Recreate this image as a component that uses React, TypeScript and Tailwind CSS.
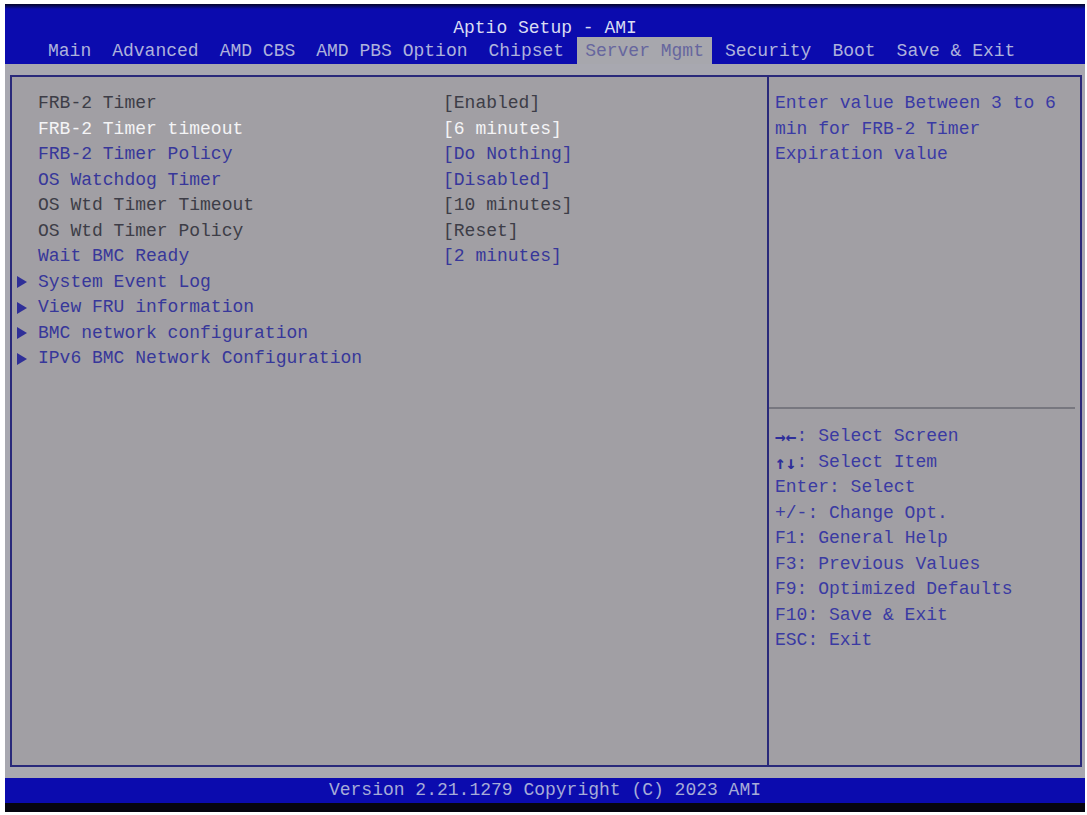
import React from "react";

type Row = {
  label: string;
  value?: string;
  tone: "dim" | "sel" | "blue";
  sub?: boolean;
};

const rows: Row[] = [
  { label: "FRB-2 Timer", value: "[Enabled]", tone: "dim" },
  { label: "FRB-2 Timer timeout", value: "[6 minutes]", tone: "sel" },
  { label: "FRB-2 Timer Policy", value: "[Do Nothing]", tone: "blue" },
  { label: "OS Watchdog Timer", value: "[Disabled]", tone: "blue" },
  { label: "OS Wtd Timer Timeout", value: "[10 minutes]", tone: "dim" },
  { label: "OS Wtd Timer Policy", value: "[Reset]", tone: "dim" },
  { label: "Wait BMC Ready", value: "[2 minutes]", tone: "blue" },
  { label: "System Event Log", tone: "blue", sub: true },
  { label: "View FRU information", tone: "blue", sub: true },
  { label: "BMC network configuration", tone: "blue", sub: true },
  { label: "IPv6 BMC Network Configuration", tone: "blue", sub: true },
];

const tabs = [
  "Main",
  "Advanced",
  "AMD CBS",
  "AMD PBS Option",
  "Chipset",
  "Server Mgmt",
  "Security",
  "Boot",
  "Save & Exit",
];

const help = ["Enter value Between 3 to 6", "min for FRB-2 Timer", "Expiration value"];

// key hint, its meaning, and whether the key is drawn as arrows
const legend: [string, string, boolean][] = [
  ["→←", ": Select Screen", true],
  ["↑↓", ": Select Item", true],
  ["Enter", ": Select", false],
  ["+/-", ": Change Opt.", false],
  ["F1", ": General Help", false],
  ["F3", ": Previous Values", false],
  ["F9", ": Optimized Defaults", false],
  ["F10", ": Save & Exit", false],
  ["ESC", ": Exit", false],
];

const toneClass = {
  dim: "text-[#3d3d47]",
  sel: "text-[#f4f4f6]",
  blue: "text-[#37379a]",
};

function Arrow() {
  return (
    <svg width="10" height="12" viewBox="0 0 10 12">
      <polygon points="0,0 10,6 0,12" fill="#2f2f98" />
    </svg>
  );
}

export default function App() {
  return (
    <div
      className="flex h-[815px] w-[1087px] flex-col bg-white pt-[4px] pr-[2px] pb-[3px] pl-[5px] text-[18px]"
      style={{ fontFamily: '"Liberation Mono", "DejaVu Sans Mono", monospace' }}
    >
      {/* header */}
      <header className="flex h-[60px] flex-col bg-[#0b0bae]">
        <div className="h-[5px] bg-linear-to-b from-[#04042a] to-[#0b0bae]" />
        <div className="flex h-[28px] justify-center pt-[9px] leading-[20px] text-[#d9dcf2]">
          Aptio Setup - AMI
        </div>
        <nav className="flex h-[27px] gap-[5px] pl-[35px] leading-[29px]">
          {tabs.map((t) => (
            <span
              key={t}
              className={
                t === "Server Mgmt"
                  ? "bg-[#a7a7ad] px-[8px] whitespace-pre text-[#66669e]"
                  : "px-[8px] whitespace-pre text-[#aeb2dc]"
              }
            >
              {t}
            </span>
          ))}
        </nav>
      </header>

      {/* body */}
      <main className="flex flex-1 bg-[#a8a8b0] pt-[11px] pr-[3px] pb-[11px] pl-[5px]">
        <div className="flex flex-1 border-2 border-[#29297a] bg-[#a19fa4]">
          <section className="w-[755px] pt-[14px]">
            {rows.map((r) => (
              <div key={r.label} className={`flex leading-[25.5px] whitespace-pre ${toneClass[r.tone]}`}>
                <span className="flex w-[26px] items-center pl-[5px]">{r.sub && <Arrow />}</span>
                <span className="w-[405px]">{r.label}</span>
                {r.value && <span>{r.value}</span>}
              </div>
            ))}
          </section>

          <aside className="flex flex-1 flex-col border-l-2 border-[#29297a]">
            <div className="h-[330px] pt-[14px] pl-[6px] leading-[25.5px] text-[#3a3aa4]">
              {help.map((h) => (
                <div key={h} className="whitespace-pre">
                  {h}
                </div>
              ))}
            </div>
            <div className="mr-[5px] h-[2px] bg-[#77777f]" />
            <div className="pt-[15px] pl-[6px] leading-[25.5px] text-[#3a3aa2]">
              {legend.map(([k, v, arrows]) => (
                <div key={k} className="flex whitespace-pre">
                  {arrows ? (
                    k.split("").map((c) => (
                      <span
                        key={c}
                        className="w-[10.8px] overflow-hidden text-center font-['DejaVu_Sans_Mono'] font-bold text-[#2e2e9a]"
                      >
                        {c}
                      </span>
                    ))
                  ) : (
                    <span>{k}</span>
                  )}
                  <span>{v}</span>
                </div>
              ))}
            </div>
          </aside>
        </div>
      </main>

      {/* footer */}
      <footer className="flex h-[25px] justify-center bg-[#0b0bae] leading-[25px] text-[#a6acd8]">
        Version 2.21.1279 Copyright (C) 2023 AMI
      </footer>
      <div className="h-[9px] bg-[#05050f]" />
    </div>
  );
}
